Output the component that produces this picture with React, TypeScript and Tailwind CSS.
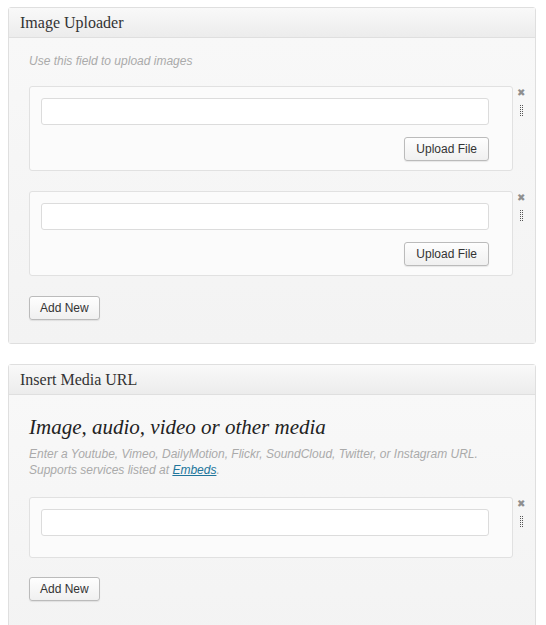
import type { ReactNode } from 'react'

const sans = { fontFamily: '"Liberation Sans", Arial, sans-serif' }
const serif = { fontFamily: '"Liberation Serif", "Times New Roman", serif' }

function Panel({ title, children }: { title: string; children: ReactNode }) {
  return (
    <div className="ml-2 mr-[10px] rounded-[3px] border border-[#dfdfdf] shadow-[inset_0_1px_0_#fff]">
      <div className="flex h-[30px] items-center border-b border-[#dfdfdf] bg-gradient-to-b from-[#f9f9f9] to-[#ececec] px-[11px]">
        <h3 className="text-[16px] text-[#333]" style={serif}>
          {title}
        </h3>
      </div>
      <div className="bg-gradient-to-b from-[#f8f8f8] to-[#f3f3f3] pl-5">{children}</div>
    </div>
  )
}

function Button({ label, wide }: { label: string; wide?: boolean }) {
  return (
    <button
      className={
        wide
          ? 'h-6 rounded-[3px] border border-[#bbb] bg-gradient-to-b from-[#fefefe] to-[#f0f0f0] px-[11px] text-[12px] text-[#333] shadow-[0_1px_1px_rgba(0,0,0,0.08)]'
          : 'h-6 rounded-[3px] border border-[#bbb] bg-gradient-to-b from-[#fefefe] to-[#f0f0f0] px-[10px] text-[12px] text-[#333] shadow-[0_1px_1px_rgba(0,0,0,0.08)]'
      }
      style={sans}
    >
      {label}
    </button>
  )
}

function Handle() {
  return (
    <svg width="4" height="12" viewBox="0 0 4 12" className="mt-[6px] ml-[7px]">
      {[0, 2, 4, 6, 8, 10].map((y) => (
        <g key={y} fill="#555">
          <rect x="0" y={y} width="1" height="1" />
          <rect x="2" y={y} width="1" height="1" />
        </g>
      ))}
    </svg>
  )
}

function Item({ upload }: { upload?: boolean }) {
  return (
    <div className="flex">
      <div className="flex-1 rounded-[3px] border border-[#e1e1e1] bg-[#fbfbfb] pt-[11px] pb-[9px] pl-[11px] pr-[23px]">
        <div className="h-[27px] rounded-[3px] border border-[#dcdcdc] bg-white" />
        {upload ? (
          <div className="mt-3 flex justify-end">
            <Button label="Upload File" wide />
          </div>
        ) : (
          <div className="h-[12px]" />
        )}
      </div>
      <div className="w-[22px] pt-[1px]">
        <div className="ml-[4px] text-[10px] leading-[12px] text-[#8f8f8f]" style={sans}>
          ✖
        </div>
        <Handle />
      </div>
    </div>
  )
}

export default function App() {
  return (
    <div className="min-h-[625px] bg-white pt-[7px]">
      <Panel title="Image Uploader">
        <p className="pt-[14px] text-[12px] italic text-[#aaa]" style={sans}>
          Use this field to upload images
        </p>
        <div className="mt-[16px] space-y-5">
          <Item upload />
          <Item upload />
        </div>
        <div className="pt-[18px] pb-[23px]">
          <Button label="Add New" />
        </div>
      </Panel>

      <div className="h-5" />

      <Panel title="Insert Media URL">
        <h2 className="pt-[18px] text-[21px] italic leading-[28px] text-[#222]" style={serif}>
          Image, audio, video or other media
        </h2>
        <p className="mt-[5px] pr-[30px] text-[12px] italic leading-[16px] text-[#aaa]" style={sans}>
          Enter a Youtube, Vimeo, DailyMotion, Flickr, SoundCloud, Twitter, or Instagram URL.
          <br />
          Supports services listed at{' '}
          <a href="#" className="text-[#21759b] underline">
            Embeds
          </a>
          .
        </p>
        <div className="mt-[19px]">
          <Item />
        </div>
        <div className="pt-[17px] pb-[40px]">
          <Button label="Add New" />
        </div>
      </Panel>
    </div>
  )
}
